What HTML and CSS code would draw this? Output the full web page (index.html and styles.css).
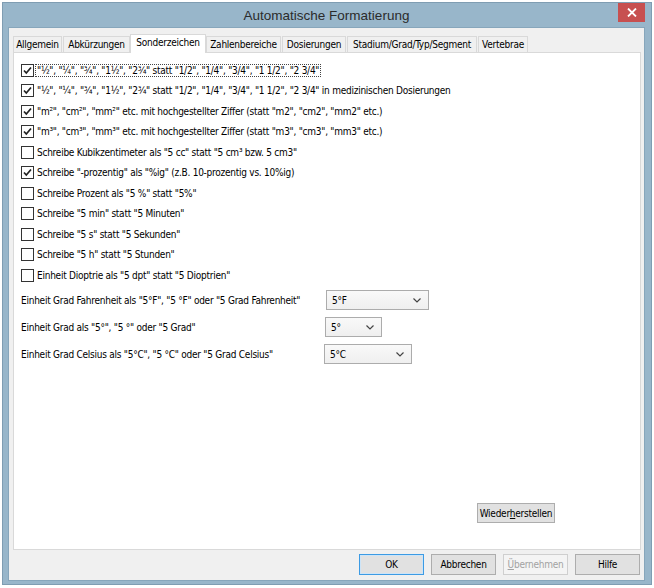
FILE: index.html
```html
<!DOCTYPE html>
<html>
<head>
<meta charset="utf-8">
<link rel="stylesheet" href="styles.css">
</head>
<body>
<div class="window">
  <div class="titlebar">
    <div class="title">Automatische Formatierung</div>
    <div class="close"><svg width="10" height="9" viewBox="0 0 10 9"><path d="M1 0.5 L9 8.5 M9 0.5 L1 8.5" stroke="#fff" stroke-width="1.8"/></svg></div>
  </div>
  <div class="client">
    <div class="tabs">
      <div class="tab t1">Allgemein</div>
      <div class="tab t2">Abkürzungen</div>
      <div class="tab t3 active">Sonderzeichen</div>
      <div class="tab t4">Zahlenbereiche</div>
      <div class="tab t5">Dosierungen</div>
      <div class="tab t6">Stadium/Grad/Typ/Segment</div>
      <div class="tab t7">Vertebrae</div>
    </div>
    <div class="panel">
      <div class="checks">
        <div class="row"><span class="cb on"><svg width="11" height="11" viewBox="0 0 11 11"><path d="M2 5.5 L4.3 8 L9 2.5" fill="none" stroke="#222" stroke-width="1.7"/></svg></span><span class="lbl focus">"½", "¼", "¾", "1½", "2¾" statt "1/2", "1/4", "3/4", "1 1/2", "2 3/4"</span></div>
        <div class="row"><span class="cb on"><svg width="11" height="11" viewBox="0 0 11 11"><path d="M2 5.5 L4.3 8 L9 2.5" fill="none" stroke="#222" stroke-width="1.7"/></svg></span><span class="lbl">"½", "¼", "¾", "1½", "2¾" statt "1/2", "1/4", "3/4", "1 1/2", "2 3/4" in medizinischen Dosierungen</span></div>
        <div class="row"><span class="cb on"><svg width="11" height="11" viewBox="0 0 11 11"><path d="M2 5.5 L4.3 8 L9 2.5" fill="none" stroke="#222" stroke-width="1.7"/></svg></span><span class="lbl">"m²", "cm²", "mm²" etc. mit hochgestellter Ziffer (statt "m2", "cm2", "mm2" etc.)</span></div>
        <div class="row"><span class="cb on"><svg width="11" height="11" viewBox="0 0 11 11"><path d="M2 5.5 L4.3 8 L9 2.5" fill="none" stroke="#222" stroke-width="1.7"/></svg></span><span class="lbl">"m³", "cm³", "mm³" etc. mit hochgestellter Ziffer (statt "m3", "cm3", "mm3" etc.)</span></div>
        <div class="row"><span class="cb"></span><span class="lbl">Schreibe Kubikzentimeter als "5 cc" statt "5 cm³ bzw. 5 cm3"</span></div>
        <div class="row"><span class="cb on"><svg width="11" height="11" viewBox="0 0 11 11"><path d="M2 5.5 L4.3 8 L9 2.5" fill="none" stroke="#222" stroke-width="1.7"/></svg></span><span class="lbl">Schreibe "-prozentig" als "%ig" (z.B. 10-prozentig vs. 10%ig)</span></div>
        <div class="row"><span class="cb"></span><span class="lbl">Schreibe Prozent als "5 %" statt "5%"</span></div>
        <div class="row"><span class="cb"></span><span class="lbl">Schreibe "5 min" statt "5 Minuten"</span></div>
        <div class="row"><span class="cb"></span><span class="lbl">Schreibe "5 s" statt "5 Sekunden"</span></div>
        <div class="row"><span class="cb"></span><span class="lbl">Schreibe "5 h" statt "5 Stunden"</span></div>
        <div class="row"><span class="cb"></span><span class="lbl">Einheit Dioptrie als "5 dpt" statt "5 Dioptrien"</span></div>
      </div>
      <div class="selects">
        <div class="srow"><span class="slbl">Einheit Grad Fahrenheit als "5°F", "5 °F" oder "5 Grad Fahrenheit"</span><div class="combo c1"><span>5°F</span><svg width="8" height="5" viewBox="0 0 8 5"><path d="M0.5 0.5 L4 4 L7.5 0.5" fill="none" stroke="#444" stroke-width="1.2"/></svg></div></div>
        <div class="srow"><span class="slbl">Einheit Grad als "5°", "5 °" oder "5 Grad"</span><div class="combo c2"><span>5°</span><svg width="8" height="5" viewBox="0 0 8 5"><path d="M0.5 0.5 L4 4 L7.5 0.5" fill="none" stroke="#444" stroke-width="1.2"/></svg></div></div>
        <div class="srow"><span class="slbl">Einheit Grad Celsius als "5°C", "5 °C" oder "5 Grad Celsius"</span><div class="combo c3"><span>5°C</span><svg width="8" height="5" viewBox="0 0 8 5"><path d="M0.5 0.5 L4 4 L7.5 0.5" fill="none" stroke="#444" stroke-width="1.2"/></svg></div></div>
      </div>
      <div class="restore-wrap"><div class="btn restore">Wieder<u>h</u>erstellen</div></div>
    </div>
    <div class="buttons">
      <div class="btn big default">OK</div>
      <div class="btn big">Abbrechen</div>
      <div class="btn big disabled"><u>Ü</u>bernehmen</div>
      <div class="btn big">Hilfe</div>
    </div>
  </div>
</div>
</body>
</html>
```
FILE: styles.css
```css
* { box-sizing: border-box; }
html, body { margin: 0; padding: 0; background: #ffffff; }
body {
  font-family: "DejaVu Sans Condensed", "Liberation Sans", Arial, sans-serif;
  font-size: 10px;
  letter-spacing: -0.25px;
  color: #000;
}

.window {
  margin: 2px 0 0 2px;
  width: 650px;
  height: 583px;
  border: 1px solid #7f9db2;
  background: #98b6ca;
  padding: 0 6px 3px 5px;
  display: flex;
  flex-direction: column;
}
.titlebar {
  height: 24px;
  display: flex;
  position: relative;
  justify-content: center;
  align-items: center;
  flex-shrink: 0;
}
.title {
  font-family: "Liberation Sans", Arial, sans-serif;
  font-size: 13.5px;
  letter-spacing: 0;
  color: #2b2b2b;
  padding-top: 1px;
}
.close {
  position: absolute;
  right: 0;
  top: 0;
  width: 27px;
  height: 19px;
  background: #c75050;
  display: flex;
  align-items: center;
  justify-content: center;
}
.client {
  flex: 1;
  background: #f0f0f0;
  border: 1px solid #87a6bb;
  padding: 5px 4px 0 4px;
  display: flex;
  flex-direction: column;
}
.tabs {
  display: flex;
  align-items: flex-end;
  height: 19px;
  position: relative;
  z-index: 1;
}
.tab {
  height: 16px;
  border: 1px solid #d9d9d9;
  border-bottom: none;
  background: #f0f0f0;
  line-height: 15px;
  margin-right: 1px;
  white-space: nowrap;
  text-align: center;
}
.tab.active {
  height: 19px;
  background: #fff;
  margin-bottom: -1px;
  line-height: 16px;
  padding-bottom: 2px;
  margin-left: -1px;
  margin-right: 0;
}
.t1 { width: 49px; }
.t2 { width: 67px; }
.t3 { width: 76px; }
.t4 { width: 75px; }
.t5 { width: 64px; }
.t6 { width: 130px; }
.t7 { width: 50px; }

.panel {
  height: 498px;
  background: #fff;
  border: 1px solid #d9d9d9;
  display: flex;
  flex-direction: column;
  padding: 7px 0 0 7px;
  width: 628px;
}
.checks { display: flex; flex-direction: column; }
.row {
  height: 20.5px;
  display: flex;
  align-items: center;
}
.cb {
  width: 13px;
  height: 13px;
  border: 1px solid #333;
  background: #fff;
  display: flex;
  align-items: center;
  justify-content: center;
  margin-right: 1px;
  flex-shrink: 0;
}
.lbl { white-space: nowrap; padding: 0 1px; border: 1px solid transparent; }
.lbl.focus { border: 1px dotted #444; }

.selects { display: flex; flex-direction: column; margin-top: 1px; }
.srow {
  height: 27px;
  display: flex;
  align-items: center;
}
.slbl { white-space: nowrap; width: 303px; }
.combo {
  height: 20px;
  border: 1px solid #acacac;
  background: linear-gradient(#f9f9f9, #efefef);
  display: flex;
  align-items: center;
  justify-content: space-between;
  padding: 0 7px 0 5px;
}
.c1 { width: 103px; margin-left: 2px; }
.c2 { width: 57px; margin-left: 1px; }
.c3 { width: 88px; margin-left: 0; }

.restore-wrap {
  flex: 1;
  display: flex;
  justify-content: flex-end;
  align-items: flex-end;
  padding: 0 85px 26px 0;
}
.btn {
  border: 1px solid #adadad;
  background: #e1e1e1;
  display: flex;
  align-items: center;
  justify-content: center;
  white-space: nowrap;
}
.restore { width: 78px; height: 20px; }
.buttons {
  display: flex;
  justify-content: flex-end;
  gap: 7px;
  padding: 4px 0 0 0;
}
.big { width: 65px; height: 21px; }
.default { border-color: #3c9be4; box-shadow: inset 0 0 0 1px #cde4f7; }
.disabled { color: #a2a2a2; border-color: #cfcfcf; background: #f4f4f4; }
```
